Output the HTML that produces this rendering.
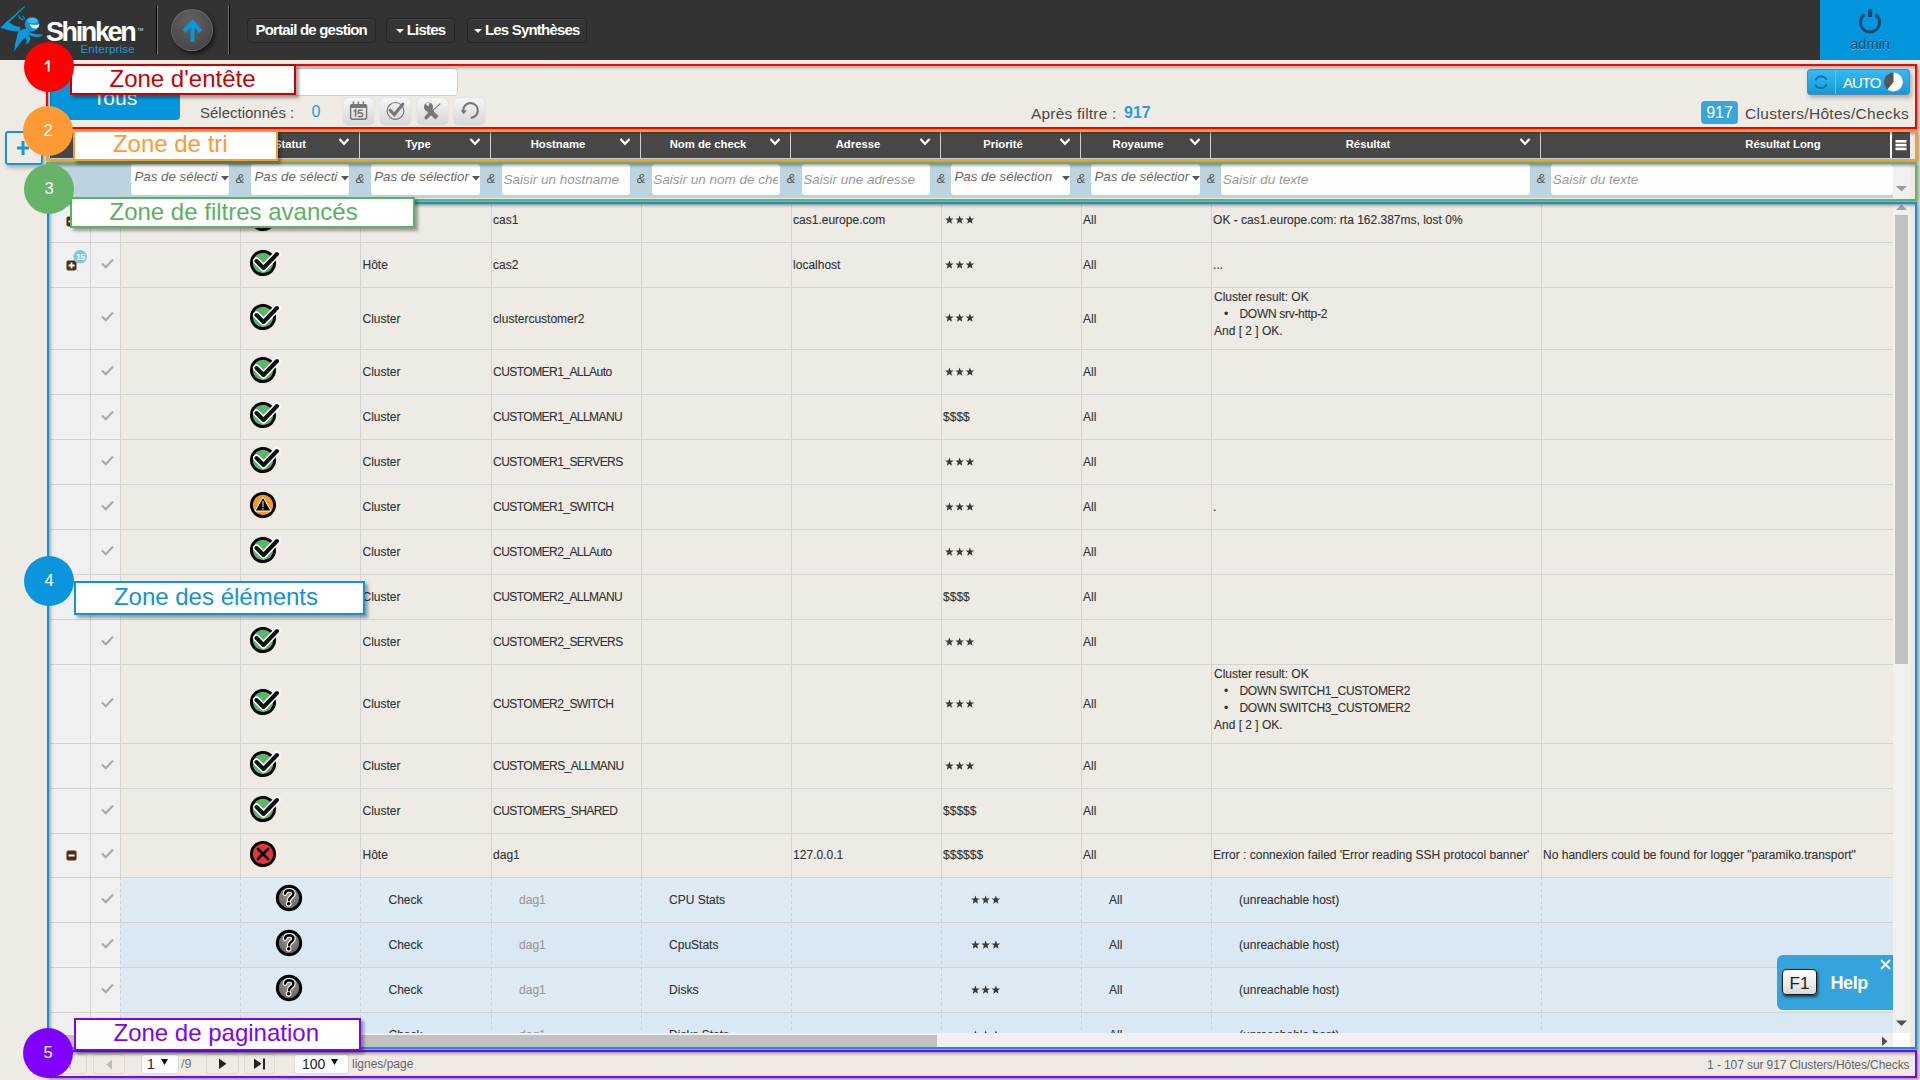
<!DOCTYPE html>
<html><head><meta charset="utf-8"><title>Shinken</title>
<style>
html,body{margin:0;padding:0;}
body{width:1920px;height:1080px;position:relative;overflow:hidden;background:#eeebe4;font-family:"Liberation Sans",sans-serif;}
.t{position:absolute;line-height:1;white-space:nowrap;}
.d{-webkit-text-stroke:0.12px currentColor;}
.b{position:absolute;box-sizing:border-box;}
svg{position:absolute;overflow:visible;}
</style></head><body>

<div class="b" style="left:0px;top:0px;width:1920px;height:60px;background:#333333;"></div>
<svg style="left:0;top:0" width="48" height="60" viewBox="0 0 48 60">
<g fill="#0e98dc">
<path d="M0.6 27.6 L24.4 5.9 L25.1 6.7 L2.4 28.8 Z"/>
<path d="M2 27.8 Q5 22.5 7.6 20.8 Q11.5 25.6 20.5 27.2 L19.6 31.6 Q9.5 31.6 2 27.8 Z"/>
<circle cx="32" cy="24.2" r="7.3"/>
<path d="M18.6 31.4 Q23 28 27.5 29 Q31 31 29.3 35 Q26 37.5 22 40.5 Q17.5 46 14 52 Q14.8 44 16.8 37.5 Q17.3 33.5 18.6 31.4 Z"/>
<path d="M26.8 35 Q31 36.8 30.4 40 Q29 43 25.6 44.8 Q27.6 41 25.8 38 Z"/>
<path d="M29 32.4 Q36 34 43 34.8 Q40.5 37.6 36 36.9 Q32 36.6 29.4 35.6 Z"/>
</g>
<ellipse cx="32.5" cy="20.5" rx="5" ry="2.6" fill="#7fcdf2" opacity="0.55"/>
<path d="M29.6 24.3 Q34 25.6 39.3 24.6 Q39 27.9 35.2 28.6 Q31.6 28.7 29.6 24.3 Z" fill="#ffffff"/>
<path d="M18.6 15.2 Q19.4 19 23.6 19.8" stroke="#0e98dc" stroke-width="1.3" fill="none"/>
<path d="M22.4 16.2 Q23.8 17.2 24.8 19" stroke="#0e98dc" stroke-width="1.1" fill="none"/>
</svg>
<div class="t " style="left:46px;top:18.64px;font-size:27px;color:#ffffff;font-weight:bold;font-style:normal;letter-spacing:-2.4px;">Shinken</div>
<div class="t " style="left:137.5px;top:27.61px;font-size:4px;color:#bbbbbb;font-weight:bold;font-style:normal;">TM</div>
<div class="t " style="left:80.5px;top:44.27px;font-size:11.5px;color:#1a9be0;font-weight:normal;font-style:normal;letter-spacing:0.2px;">Enterprise</div>
<div class="b" style="left:156px;top:5px;width:1px;height:50px;background:#050505;"></div>
<div class="b" style="left:157px;top:5px;width:1px;height:50px;background:#6e6e6e;"></div>
<div class="b" style="left:228px;top:5px;width:1px;height:50px;background:#6e6e6e;"></div>
<div class="b" style="left:229px;top:5px;width:1px;height:50px;background:#050505;"></div>
<div class="b" style="left:171px;top:9px;width:42px;height:42px;border-radius:50%;background:radial-gradient(circle at 45% 30%,#626262,#484848 75%);border:1px solid rgba(255,255,255,0.13);box-shadow:2px 3px 4px rgba(0,0,0,0.55);"></div>
<svg style="left:171px;top:9px" width="42" height="42" viewBox="0 0 42 42">
<path d="M21.5 33 L21.5 14" stroke="#0596dc" stroke-width="4" fill="none"/><path d="M13.2 22.5 L21.5 13.2 L29.8 22.5" stroke="#0596dc" stroke-width="4.2" fill="none" stroke-linejoin="miter"/>
</svg>
<div class="b" style="left:247px;top:18px;width:128.5px;height:25px;border:1px solid #262626;border-radius:4px;background:#353535;box-shadow:inset 0 1px 0 rgba(255,255,255,0.06);"></div>
<div class="t" style="left:247px;width:128.5px;top:21px;height:18px;line-height:18px;text-align:center;font-size:15px;color:#fff;font-weight:bold;letter-spacing:-0.8px;">Portail de gestion</div>
<div class="b" style="left:386px;top:18px;width:69px;height:25px;border:1px solid #262626;border-radius:4px;background:#353535;box-shadow:inset 0 1px 0 rgba(255,255,255,0.06);"></div>
<div class="t" style="left:386px;width:69px;top:21px;height:18px;line-height:18px;text-align:center;font-size:15px;color:#fff;font-weight:bold;letter-spacing:-0.8px;"><span style="display:inline-block;width:0;height:0;border-left:4px solid transparent;border-right:4px solid transparent;border-top:4px solid #fff;vertical-align:middle;margin-right:3px;"></span>Listes</div>
<div class="b" style="left:467px;top:18px;width:119.5px;height:25px;border:1px solid #262626;border-radius:4px;background:#353535;box-shadow:inset 0 1px 0 rgba(255,255,255,0.06);"></div>
<div class="t" style="left:467px;width:119.5px;top:21px;height:18px;line-height:18px;text-align:center;font-size:15px;color:#fff;font-weight:bold;letter-spacing:-0.8px;"><span style="display:inline-block;width:0;height:0;border-left:4px solid transparent;border-right:4px solid transparent;border-top:4px solid #fff;vertical-align:middle;margin-right:3px;"></span>Les Synthèses</div>
<div class="b" style="left:1820px;top:0px;width:100px;height:60px;background:#0396dc;"></div>
<svg style="left:1820px;top:0" width="100" height="60" viewBox="0 0 100 60">
<path d="M44.5 14.5 A9.6 9.6 0 1 0 55.5 14.5" stroke="#0d4a70" stroke-width="2.8" fill="none"/>
<rect x="48" y="9" width="4.2" height="8" fill="#0d4a70"/>
</svg>
<div class="t " style="left:1820.0px;width:100px;text-align:center;top:36.73px;font-size:14.5px;color:#0d4a70;font-weight:normal;font-style:normal;text-shadow:0 1px 0 rgba(255,255,255,0.35);">admin</div>
<div class="b" style="left:5px;top:131px;width:38px;height:34px;border:2px solid #1a96d8;border-radius:3px;box-shadow:2px 3px 4px rgba(0,0,0,0.25);"></div>
<svg style="left:5px;top:131px" width="38" height="34"><path d="M18 10 V24 M12 17 H24" stroke="#1a96d8" stroke-width="3" fill="none"/></svg>
<div class="b" style="left:50px;top:69px;width:130px;height:50.5px;background:#0595da;border-radius:4px;"></div>
<div class="t " style="left:50.0px;width:130px;text-align:center;top:86.72px;font-size:21px;color:#ffffff;font-weight:normal;font-style:normal;">Tous</div>
<div class="b" style="left:290px;top:68px;width:167.5px;height:27.5px;background:#fff;border:1px solid #cfcfcf;border-radius:4px;"></div>
<div class="t " style="left:200px;top:104.70px;font-size:15px;color:#4a4a4a;font-weight:normal;font-style:normal;">Sélectionnés :</div>
<div class="t " style="left:311.5px;top:103.96px;font-size:16px;color:#2a9ddc;font-weight:normal;font-style:normal;">0</div>
<div class="b" style="left:342.5px;top:98px;width:31px;height:27px;border-radius:5px;background:linear-gradient(#f6f6f6,#d6d6d6);box-shadow:0 0 1px rgba(0,0,0,0.25);"></div>
<svg style="left:342px;top:97px" width="32" height="27" viewBox="0 0 32 27"><rect x="8.6" y="7.6" width="16" height="14.6" rx="2" stroke="#777" stroke-width="1.4" fill="none"/><rect x="8.2" y="7" width="16.8" height="4" rx="1.5" fill="#777"/><path d="M11.4 5 v3.5 M16.4 5 v3.5 M21.4 5 v3.5" stroke="#777" stroke-width="1.5" stroke-linecap="round"/><path d="M11.8 14.4 L13.6 13 V19.6" stroke="#777" stroke-width="1.6" fill="none"/><path d="M20.6 13.2 H16.6 L16.3 16.2 Q17.3 15.6 18.4 15.7 Q20.7 16 20.7 17.8 Q20.6 19.8 18.3 19.8 Q16.9 19.8 16 19" stroke="#777" stroke-width="1.5" fill="none"/></svg>
<div class="b" style="left:379.5px;top:98px;width:31px;height:27px;border-radius:5px;background:linear-gradient(#f6f6f6,#d6d6d6);box-shadow:0 0 1px rgba(0,0,0,0.25);"></div>
<svg style="left:379px;top:97px" width="32" height="27" viewBox="0 0 32 27"><circle cx="16.5" cy="13.9" r="8.4" stroke="#777" stroke-width="1.2" fill="none"/><path d="M11.2 13.2 L15.3 17.6 L23.8 7.2" stroke="#777" stroke-width="3.1" fill="none" stroke-linecap="round"/></svg>
<div class="b" style="left:416.5px;top:98px;width:31px;height:27px;border-radius:5px;background:linear-gradient(#f6f6f6,#d6d6d6);box-shadow:0 0 1px rgba(0,0,0,0.25);"></div>
<svg style="left:416px;top:97px" width="32" height="27" viewBox="0 0 32 27"><path d="M12.6 13 L21 20.8" stroke="#777" stroke-width="4.6"/><circle cx="12.5" cy="10" r="4.6" fill="#777"/><path d="M9.2 6.6 L12.2 9.4 L14.2 5.6 Z" fill="#e6e6e6"/><path d="M24.3 6.6 L16 14.2" stroke="#777" stroke-width="1.1"/><path d="M16.2 14.2 L10.2 20.6" stroke="#777" stroke-width="3.6" stroke-linecap="round"/></svg>
<div class="b" style="left:453.5px;top:98px;width:31px;height:27px;border-radius:5px;background:linear-gradient(#f6f6f6,#d6d6d6);box-shadow:0 0 1px rgba(0,0,0,0.25);"></div>
<svg style="left:453px;top:97px" width="32" height="27" viewBox="0 0 32 27"><path d="M10.2 13.6 A7.3 7.3 0 1 1 18.6 20.6" stroke="#777" stroke-width="2.1" fill="none" stroke-linecap="round"/><path d="M7.6 13.3 L13.9 13.3 L10.7 17.2 Z" fill="#777"/></svg>
<div class="t " style="left:1031px;top:105.58px;font-size:15.5px;color:#4a4a4a;font-weight:normal;font-style:normal;letter-spacing:0.2px;">Après filtre :</div>
<div class="t " style="left:1124px;top:105.16px;font-size:16px;color:#2a9ddc;font-weight:bold;font-style:normal;">917</div>
<div class="b" style="left:1807px;top:69px;width:103px;height:26px;border-radius:3px;background:linear-gradient(#37b9f2,#129ad9);border:1px solid #5a86b0;box-shadow:2px 3px 4px rgba(0,0,0,0.25);"></div>
<div class="b" style="left:1834.5px;top:70px;width:1px;height:24px;background:#5bc8f5;"></div>
<svg style="left:1807px;top:69px" width="103" height="26" viewBox="0 0 103 26">
<path d="M8.5 11.5 A6 6 0 0 1 19.5 10.5" stroke="#0c6fa3" stroke-width="1.8" fill="none"/>
<path d="M19.5 15 A6 6 0 0 1 8.5 16" stroke="#0c6fa3" stroke-width="1.8" fill="none"/>
<circle cx="86.5" cy="13" r="9.5" fill="#555"/>
<path d="M86.5 3.5 A9.5 9.5 0 1 1 80.5 20.5 L86.5 13 Z" fill="#fff"/>
</svg>
<div class="t " style="left:1843px;top:74.80px;font-size:15px;color:#ffffff;font-weight:normal;font-style:normal;letter-spacing:-1px;">AUTO</div>
<div class="b" style="left:1701px;top:101px;width:37px;height:23px;background:#35a7dd;border-radius:4px;"></div>
<div class="t " style="left:1701.0px;width:37px;text-align:center;top:105.46px;font-size:16px;color:#ffffff;font-weight:normal;font-style:normal;">917</div>
<div class="t " style="left:1609px;width:300px;text-align:right;top:105.88px;font-size:15.5px;color:#4a4a4a;font-weight:normal;font-style:normal;letter-spacing:0.3px;">Clusters/Hôtes/Checks</div>
<div class="b" style="left:50px;top:132px;width:1860px;height:26px;background:linear-gradient(#555 0,#484848 5px,#474747 100%);"></div>
<div class="b" style="left:50px;top:158px;width:1860px;height:1px;background:#bcd4e0;"></div>
<div class="b" style="left:359px;top:132px;width:1px;height:26px;background:#d0d0d0;"></div>
<div class="b" style="left:490px;top:132px;width:1px;height:26px;background:#d0d0d0;"></div>
<div class="b" style="left:640px;top:132px;width:1px;height:26px;background:#d0d0d0;"></div>
<div class="b" style="left:790px;top:132px;width:1px;height:26px;background:#d0d0d0;"></div>
<div class="b" style="left:940px;top:132px;width:1px;height:26px;background:#d0d0d0;"></div>
<div class="b" style="left:1080px;top:132px;width:1px;height:26px;background:#d0d0d0;"></div>
<div class="b" style="left:1210px;top:132px;width:1px;height:26px;background:#d0d0d0;"></div>
<div class="b" style="left:1540px;top:132px;width:1px;height:26px;background:#d0d0d0;"></div>
<div class="b" style="left:1890px;top:132px;width:2px;height:26px;background:#ffffff;"></div>
<div class="t " style="left:190.0px;width:200px;text-align:center;top:139.43px;font-size:11.3px;color:#ffffff;font-weight:bold;font-style:normal;">Statut</div>
<div class="t " style="left:318.0px;width:200px;text-align:center;top:139.43px;font-size:11.3px;color:#ffffff;font-weight:bold;font-style:normal;">Type</div>
<div class="t " style="left:458.0px;width:200px;text-align:center;top:139.43px;font-size:11.3px;color:#ffffff;font-weight:bold;font-style:normal;">Hostname</div>
<div class="t " style="left:608.0px;width:200px;text-align:center;top:139.43px;font-size:11.3px;color:#ffffff;font-weight:bold;font-style:normal;">Nom de check</div>
<div class="t " style="left:758.0px;width:200px;text-align:center;top:139.43px;font-size:11.3px;color:#ffffff;font-weight:bold;font-style:normal;">Adresse</div>
<div class="t " style="left:903.0px;width:200px;text-align:center;top:139.43px;font-size:11.3px;color:#ffffff;font-weight:bold;font-style:normal;">Priorité</div>
<div class="t " style="left:1038.0px;width:200px;text-align:center;top:139.43px;font-size:11.3px;color:#ffffff;font-weight:bold;font-style:normal;">Royaume</div>
<div class="t " style="left:1268.0px;width:200px;text-align:center;top:139.43px;font-size:11.3px;color:#ffffff;font-weight:bold;font-style:normal;">Résultat</div>
<div class="t " style="left:1683.0px;width:200px;text-align:center;top:139.43px;font-size:11.3px;color:#ffffff;font-weight:bold;font-style:normal;">Résultat Long</div>
<svg style="left:338px;top:137px" width="12" height="10"><path d="M1.5 2 L6 6.8 L10.5 2" stroke="#fff" stroke-width="2.2" fill="none"/></svg>
<svg style="left:469px;top:137px" width="12" height="10"><path d="M1.5 2 L6 6.8 L10.5 2" stroke="#fff" stroke-width="2.2" fill="none"/></svg>
<svg style="left:619px;top:137px" width="12" height="10"><path d="M1.5 2 L6 6.8 L10.5 2" stroke="#fff" stroke-width="2.2" fill="none"/></svg>
<svg style="left:769px;top:137px" width="12" height="10"><path d="M1.5 2 L6 6.8 L10.5 2" stroke="#fff" stroke-width="2.2" fill="none"/></svg>
<svg style="left:919px;top:137px" width="12" height="10"><path d="M1.5 2 L6 6.8 L10.5 2" stroke="#fff" stroke-width="2.2" fill="none"/></svg>
<svg style="left:1059px;top:137px" width="12" height="10"><path d="M1.5 2 L6 6.8 L10.5 2" stroke="#fff" stroke-width="2.2" fill="none"/></svg>
<svg style="left:1189px;top:137px" width="12" height="10"><path d="M1.5 2 L6 6.8 L10.5 2" stroke="#fff" stroke-width="2.2" fill="none"/></svg>
<svg style="left:1519px;top:137px" width="12" height="10"><path d="M1.5 2 L6 6.8 L10.5 2" stroke="#fff" stroke-width="2.2" fill="none"/></svg>
<svg style="left:1892px;top:132px" width="18" height="26"><rect x="3.5" y="8" width="11" height="2.6" fill="#fff"/><rect x="3.5" y="11.8" width="11" height="2.6" fill="#fff"/><rect x="3.5" y="15.6" width="11" height="2.6" fill="#fff"/></svg>
<div class="b" style="left:50px;top:164px;width:1843px;height:34px;background:#bcd4e0;"></div>
<div class="b" style="left:1893px;top:164px;width:17px;height:35px;background:#f0f0f0;"></div>
<svg style="left:1896px;top:186px" width="11" height="6"><path d="M0 0 H11 L5.5 5.5 Z" fill="#999"/></svg>
<div class="b" style="left:131px;top:164.2px;width:98px;height:31px;background:#fff;border-radius:3px;overflow:hidden;"></div>
<div class="t" style="left:134.5px;top:170.04px;width:87px;overflow:hidden;font-size:13.3px;color:#666;font-style:italic;">Pas de sélecti</div>
<svg style="left:221px;top:176px" width="8" height="5"><path d="M0 0 H8 L4 4.5 Z" fill="#555"/></svg>
<div class="b" style="left:251px;top:164.2px;width:98px;height:31px;background:#fff;border-radius:3px;overflow:hidden;"></div>
<div class="t" style="left:254.5px;top:170.04px;width:87px;overflow:hidden;font-size:13.3px;color:#666;font-style:italic;">Pas de sélecti</div>
<svg style="left:341px;top:176px" width="8" height="5"><path d="M0 0 H8 L4 4.5 Z" fill="#555"/></svg>
<div class="b" style="left:370.75px;top:164.2px;width:109.25px;height:31px;background:#fff;border-radius:3px;overflow:hidden;"></div>
<div class="t" style="left:374.25px;top:170.04px;width:98.25px;overflow:hidden;font-size:13.3px;color:#666;font-style:italic;">Pas de sélectior</div>
<svg style="left:472px;top:176px" width="8" height="5"><path d="M0 0 H8 L4 4.5 Z" fill="#555"/></svg>
<div class="b" style="left:951px;top:164.2px;width:119px;height:31px;background:#fff;border-radius:3px;overflow:hidden;"></div>
<div class="t" style="left:954.5px;top:170.04px;width:108px;overflow:hidden;font-size:13.3px;color:#666;font-style:italic;">Pas de sélection</div>
<svg style="left:1062px;top:176px" width="8" height="5"><path d="M0 0 H8 L4 4.5 Z" fill="#555"/></svg>
<div class="b" style="left:1091px;top:164.2px;width:109px;height:31px;background:#fff;border-radius:3px;overflow:hidden;"></div>
<div class="t" style="left:1094.5px;top:170.04px;width:98px;overflow:hidden;font-size:13.3px;color:#666;font-style:italic;">Pas de sélectior</div>
<svg style="left:1192px;top:176px" width="8" height="5"><path d="M0 0 H8 L4 4.5 Z" fill="#555"/></svg>
<div class="b" style="left:501.75px;top:164.2px;width:128.25px;height:31px;background:#fff;border-radius:3px;"></div>
<div class="t" style="left:503.45px;top:173.27px;width:124.25px;overflow:hidden;font-size:13.5px;color:#999;font-style:italic;">Saisir un hostname</div>
<div class="b" style="left:651.5px;top:164.2px;width:128.5px;height:31px;background:#fff;border-radius:3px;"></div>
<div class="t" style="left:653.2px;top:173.27px;width:124.5px;overflow:hidden;font-size:13.5px;color:#999;font-style:italic;">Saisir un nom de check</div>
<div class="b" style="left:801.5px;top:164.2px;width:128.5px;height:31px;background:#fff;border-radius:3px;"></div>
<div class="t" style="left:803.2px;top:173.27px;width:124.5px;overflow:hidden;font-size:13.5px;color:#999;font-style:italic;">Saisir une adresse</div>
<div class="b" style="left:1221px;top:164.2px;width:309px;height:31px;background:#fff;border-radius:3px;"></div>
<div class="t" style="left:1222.7px;top:173.27px;width:305px;overflow:hidden;font-size:13.5px;color:#999;font-style:italic;">Saisir du texte</div>
<div class="b" style="left:1551px;top:164.2px;width:342px;height:31px;background:#fff;border-radius:3px;"></div>
<div class="t" style="left:1552.7px;top:173.27px;width:338px;overflow:hidden;font-size:13.5px;color:#999;font-style:italic;">Saisir du texte</div>
<div class="t " style="left:230.0px;width:20px;text-align:center;top:172.00px;font-size:13px;color:#555;font-weight:normal;font-style:italic;">&amp;</div>
<div class="t " style="left:350.0px;width:20px;text-align:center;top:172.00px;font-size:13px;color:#555;font-weight:normal;font-style:italic;">&amp;</div>
<div class="t " style="left:481.0px;width:20px;text-align:center;top:172.00px;font-size:13px;color:#555;font-weight:normal;font-style:italic;">&amp;</div>
<div class="t " style="left:631.0px;width:20px;text-align:center;top:172.00px;font-size:13px;color:#555;font-weight:normal;font-style:italic;">&amp;</div>
<div class="t " style="left:781.0px;width:20px;text-align:center;top:172.00px;font-size:13px;color:#555;font-weight:normal;font-style:italic;">&amp;</div>
<div class="t " style="left:931.0px;width:20px;text-align:center;top:172.00px;font-size:13px;color:#555;font-weight:normal;font-style:italic;">&amp;</div>
<div class="t " style="left:1071.0px;width:20px;text-align:center;top:172.00px;font-size:13px;color:#555;font-weight:normal;font-style:italic;">&amp;</div>
<div class="t " style="left:1201.0px;width:20px;text-align:center;top:172.00px;font-size:13px;color:#555;font-weight:normal;font-style:italic;">&amp;</div>
<div class="t " style="left:1531.0px;width:20px;text-align:center;top:172.00px;font-size:13px;color:#555;font-weight:normal;font-style:italic;">&amp;</div>
<div class="b" style="left:50px;top:204px;width:1843px;height:829px;overflow:hidden;">
<div class="b" style="left:0px;top:0px;width:70px;height:829px;background:#f0f0f0;"></div>
<div class="b" style="left:70px;top:673px;width:1773px;height:45px;background:#deeaf4;"></div>
<div class="b" style="left:70px;top:718px;width:1773px;height:45px;background:#d9e8f3;"></div>
<div class="b" style="left:70px;top:763px;width:1773px;height:45px;background:#deeaf4;"></div>
<div class="b" style="left:70px;top:808px;width:1773px;height:45px;background:#d9e8f3;"></div>
<div class="b" style="left:0px;top:38px;width:1843px;height:1px;background:#d3d3d3;"></div>
<div class="b" style="left:0px;top:83px;width:1843px;height:1px;background:#d3d3d3;"></div>
<div class="b" style="left:0px;top:145px;width:1843px;height:1px;background:#d3d3d3;"></div>
<div class="b" style="left:0px;top:190px;width:1843px;height:1px;background:#d3d3d3;"></div>
<div class="b" style="left:0px;top:235px;width:1843px;height:1px;background:#d3d3d3;"></div>
<div class="b" style="left:0px;top:280px;width:1843px;height:1px;background:#d3d3d3;"></div>
<div class="b" style="left:0px;top:325px;width:1843px;height:1px;background:#d3d3d3;"></div>
<div class="b" style="left:0px;top:370px;width:1843px;height:1px;background:#d3d3d3;"></div>
<div class="b" style="left:0px;top:415px;width:1843px;height:1px;background:#d3d3d3;"></div>
<div class="b" style="left:0px;top:460px;width:1843px;height:1px;background:#d3d3d3;"></div>
<div class="b" style="left:0px;top:539px;width:1843px;height:1px;background:#d3d3d3;"></div>
<div class="b" style="left:0px;top:584px;width:1843px;height:1px;background:#d3d3d3;"></div>
<div class="b" style="left:0px;top:629px;width:1843px;height:1px;background:#d3d3d3;"></div>
<div class="b" style="left:0px;top:673px;width:1843px;height:1px;background:#d3d3d3;"></div>
<div class="b" style="left:0px;top:718px;width:1843px;height:1px;background:#d3d3d3;"></div>
<div class="b" style="left:0px;top:763px;width:1843px;height:1px;background:#d3d3d3;"></div>
<div class="b" style="left:0px;top:808px;width:1843px;height:1px;background:#d3d3d3;"></div>
<div class="b" style="left:0px;top:853px;width:1843px;height:1px;background:#d3d3d3;"></div>
<div class="b" style="left:40px;top:0px;width:1px;height:673px;background:#d3d3d3;"></div>
<div class="b" style="left:40px;top:673px;width:1px;height:156px;background:#d3d3d3;"></div>
<div class="b" style="left:70px;top:0px;width:1px;height:673px;background:#d3d3d3;"></div>
<div class="b" style="left:70px;top:673px;width:1px;height:156px;background:repeating-linear-gradient(#cfcfcf 0 3px,transparent 3px 6px);"></div>
<div class="b" style="left:190px;top:0px;width:1px;height:673px;background:#d3d3d3;"></div>
<div class="b" style="left:190px;top:673px;width:1px;height:156px;background:repeating-linear-gradient(#cfcfcf 0 3px,transparent 3px 6px);"></div>
<div class="b" style="left:310px;top:0px;width:1px;height:673px;background:#d3d3d3;"></div>
<div class="b" style="left:310px;top:673px;width:1px;height:156px;background:repeating-linear-gradient(#cfcfcf 0 3px,transparent 3px 6px);"></div>
<div class="b" style="left:441px;top:0px;width:1px;height:673px;background:#d3d3d3;"></div>
<div class="b" style="left:441px;top:673px;width:1px;height:156px;background:repeating-linear-gradient(#cfcfcf 0 3px,transparent 3px 6px);"></div>
<div class="b" style="left:591px;top:0px;width:1px;height:673px;background:#d3d3d3;"></div>
<div class="b" style="left:591px;top:673px;width:1px;height:156px;background:repeating-linear-gradient(#cfcfcf 0 3px,transparent 3px 6px);"></div>
<div class="b" style="left:741px;top:0px;width:1px;height:673px;background:#d3d3d3;"></div>
<div class="b" style="left:741px;top:673px;width:1px;height:156px;background:repeating-linear-gradient(#cfcfcf 0 3px,transparent 3px 6px);"></div>
<div class="b" style="left:891px;top:0px;width:1px;height:673px;background:#d3d3d3;"></div>
<div class="b" style="left:891px;top:673px;width:1px;height:156px;background:repeating-linear-gradient(#cfcfcf 0 3px,transparent 3px 6px);"></div>
<div class="b" style="left:1031px;top:0px;width:1px;height:673px;background:#d3d3d3;"></div>
<div class="b" style="left:1031px;top:673px;width:1px;height:156px;background:repeating-linear-gradient(#cfcfcf 0 3px,transparent 3px 6px);"></div>
<div class="b" style="left:1161px;top:0px;width:1px;height:673px;background:#d3d3d3;"></div>
<div class="b" style="left:1161px;top:673px;width:1px;height:156px;background:repeating-linear-gradient(#cfcfcf 0 3px,transparent 3px 6px);"></div>
<div class="b" style="left:1491px;top:0px;width:1px;height:673px;background:#d3d3d3;"></div>
<div class="b" style="left:1491px;top:673px;width:1px;height:156px;background:repeating-linear-gradient(#cfcfcf 0 3px,transparent 3px 6px);"></div>
<svg style="left:51px;top:8.5px" width="13" height="11"><path d="M1 5.5 L4.8 9.3 L12 1.5" stroke="#a8a8a8" stroke-width="2" fill="none"/></svg>
<svg style="left:198px;top:-1.0px" width="30" height="30" viewBox="0 0 30 30"><circle cx="15" cy="15" r="13.5" fill="rgba(0,0,0,0.08)"/><circle cx="15" cy="15" r="11.6" fill="#5cb46e" stroke="#000" stroke-width="2.8"/><path d="M8.5 13 L15.5 20 L29 6" stroke="#fff" stroke-width="7" fill="none" stroke-linecap="round" stroke-linejoin="round"/><path d="M8.5 13 L15.5 20 L29 6" stroke="#111" stroke-width="4" fill="none" stroke-linecap="round" stroke-linejoin="round"/></svg>
<div class="t d" style="left:312.5px;top:10.34px;font-size:12px;color:#333333;font-weight:normal;font-style:normal;">Hôte</div>
<div class="t d" style="left:443.1px;top:10.34px;font-size:12px;color:#333333;font-weight:normal;font-style:normal;letter-spacing:0px;">cas1</div>
<div class="t d" style="left:743.1px;top:10.34px;font-size:12px;color:#333333;font-weight:normal;font-style:normal;">cas1.europe.com</div>
<svg style="left:895px;top:10.90px" width="32" height="10"><path d="M4.40,0.50 L5.52,3.46 L8.68,3.61 L6.21,5.59 L7.05,8.64 L4.40,6.90 L1.75,8.64 L2.59,5.59 L0.12,3.61 L3.28,3.46 Z M14.65,0.50 L15.77,3.46 L18.93,3.61 L16.46,5.59 L17.30,8.64 L14.65,6.90 L12.00,8.64 L12.84,5.59 L10.37,3.61 L13.53,3.46 Z M24.90,0.50 L26.02,3.46 L29.18,3.61 L26.71,5.59 L27.55,8.64 L24.90,6.90 L22.25,8.64 L23.09,5.59 L20.62,3.61 L23.78,3.46 Z" fill="#3a3a3a"/></svg>
<div class="t d" style="left:1033.1px;top:10.34px;font-size:12px;color:#333333;font-weight:normal;font-style:normal;">All</div>
<div class="t d" style="left:1163.1px;top:10.34px;font-size:12px;color:#333333;font-weight:normal;font-style:normal;">OK - cas1.europe.com: rta 162.387ms, lost 0%</div>
<svg style="left:51px;top:53.5px" width="13" height="11"><path d="M1 5.5 L4.8 9.3 L12 1.5" stroke="#a8a8a8" stroke-width="2" fill="none"/></svg>
<svg style="left:198px;top:44.0px" width="30" height="30" viewBox="0 0 30 30"><circle cx="15" cy="15" r="13.5" fill="rgba(0,0,0,0.08)"/><circle cx="15" cy="15" r="11.6" fill="#5cb46e" stroke="#000" stroke-width="2.8"/><path d="M8.5 13 L15.5 20 L29 6" stroke="#fff" stroke-width="7" fill="none" stroke-linecap="round" stroke-linejoin="round"/><path d="M8.5 13 L15.5 20 L29 6" stroke="#111" stroke-width="4" fill="none" stroke-linecap="round" stroke-linejoin="round"/></svg>
<div class="t d" style="left:312.5px;top:55.34px;font-size:12px;color:#333333;font-weight:normal;font-style:normal;">Hôte</div>
<div class="t d" style="left:443.1px;top:55.34px;font-size:12px;color:#333333;font-weight:normal;font-style:normal;letter-spacing:0px;">cas2</div>
<div class="t d" style="left:743.1px;top:55.34px;font-size:12px;color:#333333;font-weight:normal;font-style:normal;">localhost</div>
<svg style="left:895px;top:55.90px" width="32" height="10"><path d="M4.40,0.50 L5.52,3.46 L8.68,3.61 L6.21,5.59 L7.05,8.64 L4.40,6.90 L1.75,8.64 L2.59,5.59 L0.12,3.61 L3.28,3.46 Z M14.65,0.50 L15.77,3.46 L18.93,3.61 L16.46,5.59 L17.30,8.64 L14.65,6.90 L12.00,8.64 L12.84,5.59 L10.37,3.61 L13.53,3.46 Z M24.90,0.50 L26.02,3.46 L29.18,3.61 L26.71,5.59 L27.55,8.64 L24.90,6.90 L22.25,8.64 L23.09,5.59 L20.62,3.61 L23.78,3.46 Z" fill="#3a3a3a"/></svg>
<div class="t d" style="left:1033.1px;top:55.34px;font-size:12px;color:#333333;font-weight:normal;font-style:normal;">All</div>
<div class="t d" style="left:1163.1px;top:55.34px;font-size:12px;color:#333333;font-weight:normal;font-style:normal;">...</div>
<svg style="left:51px;top:107.0px" width="13" height="11"><path d="M1 5.5 L4.8 9.3 L12 1.5" stroke="#a8a8a8" stroke-width="2" fill="none"/></svg>
<svg style="left:198px;top:97.5px" width="30" height="30" viewBox="0 0 30 30"><circle cx="15" cy="15" r="13.5" fill="rgba(0,0,0,0.08)"/><circle cx="15" cy="15" r="11.6" fill="#5cb46e" stroke="#000" stroke-width="2.8"/><path d="M8.5 13 L15.5 20 L29 6" stroke="#fff" stroke-width="7" fill="none" stroke-linecap="round" stroke-linejoin="round"/><path d="M8.5 13 L15.5 20 L29 6" stroke="#111" stroke-width="4" fill="none" stroke-linecap="round" stroke-linejoin="round"/></svg>
<div class="t d" style="left:312.5px;top:108.84px;font-size:12px;color:#333333;font-weight:normal;font-style:normal;">Cluster</div>
<div class="t d" style="left:443.1px;top:108.84px;font-size:12px;color:#333333;font-weight:normal;font-style:normal;letter-spacing:0px;">clustercustomer2</div>
<svg style="left:895px;top:109.40px" width="32" height="10"><path d="M4.40,0.50 L5.52,3.46 L8.68,3.61 L6.21,5.59 L7.05,8.64 L4.40,6.90 L1.75,8.64 L2.59,5.59 L0.12,3.61 L3.28,3.46 Z M14.65,0.50 L15.77,3.46 L18.93,3.61 L16.46,5.59 L17.30,8.64 L14.65,6.90 L12.00,8.64 L12.84,5.59 L10.37,3.61 L13.53,3.46 Z M24.90,0.50 L26.02,3.46 L29.18,3.61 L26.71,5.59 L27.55,8.64 L24.90,6.90 L22.25,8.64 L23.09,5.59 L20.62,3.61 L23.78,3.46 Z" fill="#3a3a3a"/></svg>
<div class="t d" style="left:1033.1px;top:108.84px;font-size:12px;color:#333333;font-weight:normal;font-style:normal;">All</div>
<div class="t d" style="left:1164px;top:87.24px;font-size:12px;color:#333333;font-weight:normal;font-style:normal;">Cluster result: OK</div>
<div class="t d" style="left:1174px;top:104.24px;font-size:12px;color:#333333;font-weight:normal;font-style:normal;">•</div>
<div class="t d" style="left:1189.5px;top:104.24px;font-size:12px;color:#333333;font-weight:normal;font-style:normal;letter-spacing:-0.3px;">DOWN srv-http-2</div>
<div class="t d" style="left:1164px;top:121.24px;font-size:12px;color:#333333;font-weight:normal;font-style:normal;">And [ 2 ] OK.</div>
<svg style="left:51px;top:160.5px" width="13" height="11"><path d="M1 5.5 L4.8 9.3 L12 1.5" stroke="#a8a8a8" stroke-width="2" fill="none"/></svg>
<svg style="left:198px;top:151.0px" width="30" height="30" viewBox="0 0 30 30"><circle cx="15" cy="15" r="13.5" fill="rgba(0,0,0,0.08)"/><circle cx="15" cy="15" r="11.6" fill="#5cb46e" stroke="#000" stroke-width="2.8"/><path d="M8.5 13 L15.5 20 L29 6" stroke="#fff" stroke-width="7" fill="none" stroke-linecap="round" stroke-linejoin="round"/><path d="M8.5 13 L15.5 20 L29 6" stroke="#111" stroke-width="4" fill="none" stroke-linecap="round" stroke-linejoin="round"/></svg>
<div class="t d" style="left:312.5px;top:162.34px;font-size:12px;color:#333333;font-weight:normal;font-style:normal;">Cluster</div>
<div class="t d" style="left:443.1px;top:162.34px;font-size:12px;color:#333333;font-weight:normal;font-style:normal;letter-spacing:-0.55px;">CUSTOMER1_ALLAuto</div>
<svg style="left:895px;top:162.90px" width="32" height="10"><path d="M4.40,0.50 L5.52,3.46 L8.68,3.61 L6.21,5.59 L7.05,8.64 L4.40,6.90 L1.75,8.64 L2.59,5.59 L0.12,3.61 L3.28,3.46 Z M14.65,0.50 L15.77,3.46 L18.93,3.61 L16.46,5.59 L17.30,8.64 L14.65,6.90 L12.00,8.64 L12.84,5.59 L10.37,3.61 L13.53,3.46 Z M24.90,0.50 L26.02,3.46 L29.18,3.61 L26.71,5.59 L27.55,8.64 L24.90,6.90 L22.25,8.64 L23.09,5.59 L20.62,3.61 L23.78,3.46 Z" fill="#3a3a3a"/></svg>
<div class="t d" style="left:1033.1px;top:162.34px;font-size:12px;color:#333333;font-weight:normal;font-style:normal;">All</div>
<svg style="left:51px;top:205.5px" width="13" height="11"><path d="M1 5.5 L4.8 9.3 L12 1.5" stroke="#a8a8a8" stroke-width="2" fill="none"/></svg>
<svg style="left:198px;top:196.0px" width="30" height="30" viewBox="0 0 30 30"><circle cx="15" cy="15" r="13.5" fill="rgba(0,0,0,0.08)"/><circle cx="15" cy="15" r="11.6" fill="#5cb46e" stroke="#000" stroke-width="2.8"/><path d="M8.5 13 L15.5 20 L29 6" stroke="#fff" stroke-width="7" fill="none" stroke-linecap="round" stroke-linejoin="round"/><path d="M8.5 13 L15.5 20 L29 6" stroke="#111" stroke-width="4" fill="none" stroke-linecap="round" stroke-linejoin="round"/></svg>
<div class="t d" style="left:312.5px;top:207.34px;font-size:12px;color:#333333;font-weight:normal;font-style:normal;">Cluster</div>
<div class="t d" style="left:443.1px;top:207.34px;font-size:12px;color:#333333;font-weight:normal;font-style:normal;letter-spacing:-0.55px;">CUSTOMER1_ALLMANU</div>
<div class="t d" style="left:893.1px;top:207.34px;font-size:12px;color:#333333;font-weight:normal;font-style:normal;">$$$$</div>
<div class="t d" style="left:1033.1px;top:207.34px;font-size:12px;color:#333333;font-weight:normal;font-style:normal;">All</div>
<svg style="left:51px;top:250.5px" width="13" height="11"><path d="M1 5.5 L4.8 9.3 L12 1.5" stroke="#a8a8a8" stroke-width="2" fill="none"/></svg>
<svg style="left:198px;top:241.0px" width="30" height="30" viewBox="0 0 30 30"><circle cx="15" cy="15" r="13.5" fill="rgba(0,0,0,0.08)"/><circle cx="15" cy="15" r="11.6" fill="#5cb46e" stroke="#000" stroke-width="2.8"/><path d="M8.5 13 L15.5 20 L29 6" stroke="#fff" stroke-width="7" fill="none" stroke-linecap="round" stroke-linejoin="round"/><path d="M8.5 13 L15.5 20 L29 6" stroke="#111" stroke-width="4" fill="none" stroke-linecap="round" stroke-linejoin="round"/></svg>
<div class="t d" style="left:312.5px;top:252.34px;font-size:12px;color:#333333;font-weight:normal;font-style:normal;">Cluster</div>
<div class="t d" style="left:443.1px;top:252.34px;font-size:12px;color:#333333;font-weight:normal;font-style:normal;letter-spacing:-0.55px;">CUSTOMER1_SERVERS</div>
<svg style="left:895px;top:252.90px" width="32" height="10"><path d="M4.40,0.50 L5.52,3.46 L8.68,3.61 L6.21,5.59 L7.05,8.64 L4.40,6.90 L1.75,8.64 L2.59,5.59 L0.12,3.61 L3.28,3.46 Z M14.65,0.50 L15.77,3.46 L18.93,3.61 L16.46,5.59 L17.30,8.64 L14.65,6.90 L12.00,8.64 L12.84,5.59 L10.37,3.61 L13.53,3.46 Z M24.90,0.50 L26.02,3.46 L29.18,3.61 L26.71,5.59 L27.55,8.64 L24.90,6.90 L22.25,8.64 L23.09,5.59 L20.62,3.61 L23.78,3.46 Z" fill="#3a3a3a"/></svg>
<div class="t d" style="left:1033.1px;top:252.34px;font-size:12px;color:#333333;font-weight:normal;font-style:normal;">All</div>
<svg style="left:51px;top:295.5px" width="13" height="11"><path d="M1 5.5 L4.8 9.3 L12 1.5" stroke="#a8a8a8" stroke-width="2" fill="none"/></svg>
<svg style="left:198px;top:286.0px" width="30" height="30" viewBox="0 0 30 30"><circle cx="15" cy="15" r="13.5" fill="rgba(0,0,0,0.08)"/><circle cx="15" cy="15" r="11.6" fill="#f19a26" stroke="#000" stroke-width="2.8"/><path d="M15 7 L23 21 L7 21 Z" fill="#000" stroke="#fff" stroke-width="1" stroke-linejoin="round"/><rect x="14.2" y="11" width="1.6" height="6" fill="#e8901e"/><rect x="14.2" y="18" width="1.6" height="1.6" fill="#e8901e"/></svg>
<div class="t d" style="left:312.5px;top:297.34px;font-size:12px;color:#333333;font-weight:normal;font-style:normal;">Cluster</div>
<div class="t d" style="left:443.1px;top:297.34px;font-size:12px;color:#333333;font-weight:normal;font-style:normal;letter-spacing:-0.55px;">CUSTOMER1_SWITCH</div>
<svg style="left:895px;top:297.90px" width="32" height="10"><path d="M4.40,0.50 L5.52,3.46 L8.68,3.61 L6.21,5.59 L7.05,8.64 L4.40,6.90 L1.75,8.64 L2.59,5.59 L0.12,3.61 L3.28,3.46 Z M14.65,0.50 L15.77,3.46 L18.93,3.61 L16.46,5.59 L17.30,8.64 L14.65,6.90 L12.00,8.64 L12.84,5.59 L10.37,3.61 L13.53,3.46 Z M24.90,0.50 L26.02,3.46 L29.18,3.61 L26.71,5.59 L27.55,8.64 L24.90,6.90 L22.25,8.64 L23.09,5.59 L20.62,3.61 L23.78,3.46 Z" fill="#3a3a3a"/></svg>
<div class="t d" style="left:1033.1px;top:297.34px;font-size:12px;color:#333333;font-weight:normal;font-style:normal;">All</div>
<div class="t d" style="left:1163.1px;top:297.34px;font-size:12px;color:#333333;font-weight:normal;font-style:normal;">.</div>
<svg style="left:51px;top:340.5px" width="13" height="11"><path d="M1 5.5 L4.8 9.3 L12 1.5" stroke="#a8a8a8" stroke-width="2" fill="none"/></svg>
<svg style="left:198px;top:331.0px" width="30" height="30" viewBox="0 0 30 30"><circle cx="15" cy="15" r="13.5" fill="rgba(0,0,0,0.08)"/><circle cx="15" cy="15" r="11.6" fill="#5cb46e" stroke="#000" stroke-width="2.8"/><path d="M8.5 13 L15.5 20 L29 6" stroke="#fff" stroke-width="7" fill="none" stroke-linecap="round" stroke-linejoin="round"/><path d="M8.5 13 L15.5 20 L29 6" stroke="#111" stroke-width="4" fill="none" stroke-linecap="round" stroke-linejoin="round"/></svg>
<div class="t d" style="left:312.5px;top:342.34px;font-size:12px;color:#333333;font-weight:normal;font-style:normal;">Cluster</div>
<div class="t d" style="left:443.1px;top:342.34px;font-size:12px;color:#333333;font-weight:normal;font-style:normal;letter-spacing:-0.55px;">CUSTOMER2_ALLAuto</div>
<svg style="left:895px;top:342.90px" width="32" height="10"><path d="M4.40,0.50 L5.52,3.46 L8.68,3.61 L6.21,5.59 L7.05,8.64 L4.40,6.90 L1.75,8.64 L2.59,5.59 L0.12,3.61 L3.28,3.46 Z M14.65,0.50 L15.77,3.46 L18.93,3.61 L16.46,5.59 L17.30,8.64 L14.65,6.90 L12.00,8.64 L12.84,5.59 L10.37,3.61 L13.53,3.46 Z M24.90,0.50 L26.02,3.46 L29.18,3.61 L26.71,5.59 L27.55,8.64 L24.90,6.90 L22.25,8.64 L23.09,5.59 L20.62,3.61 L23.78,3.46 Z" fill="#3a3a3a"/></svg>
<div class="t d" style="left:1033.1px;top:342.34px;font-size:12px;color:#333333;font-weight:normal;font-style:normal;">All</div>
<svg style="left:51px;top:385.5px" width="13" height="11"><path d="M1 5.5 L4.8 9.3 L12 1.5" stroke="#a8a8a8" stroke-width="2" fill="none"/></svg>
<svg style="left:198px;top:376.0px" width="30" height="30" viewBox="0 0 30 30"><circle cx="15" cy="15" r="13.5" fill="rgba(0,0,0,0.08)"/><circle cx="15" cy="15" r="11.6" fill="#5cb46e" stroke="#000" stroke-width="2.8"/><path d="M8.5 13 L15.5 20 L29 6" stroke="#fff" stroke-width="7" fill="none" stroke-linecap="round" stroke-linejoin="round"/><path d="M8.5 13 L15.5 20 L29 6" stroke="#111" stroke-width="4" fill="none" stroke-linecap="round" stroke-linejoin="round"/></svg>
<div class="t d" style="left:312.5px;top:387.34px;font-size:12px;color:#333333;font-weight:normal;font-style:normal;">Cluster</div>
<div class="t d" style="left:443.1px;top:387.34px;font-size:12px;color:#333333;font-weight:normal;font-style:normal;letter-spacing:-0.55px;">CUSTOMER2_ALLMANU</div>
<div class="t d" style="left:893.1px;top:387.34px;font-size:12px;color:#333333;font-weight:normal;font-style:normal;">$$$$</div>
<div class="t d" style="left:1033.1px;top:387.34px;font-size:12px;color:#333333;font-weight:normal;font-style:normal;">All</div>
<svg style="left:51px;top:430.5px" width="13" height="11"><path d="M1 5.5 L4.8 9.3 L12 1.5" stroke="#a8a8a8" stroke-width="2" fill="none"/></svg>
<svg style="left:198px;top:421.0px" width="30" height="30" viewBox="0 0 30 30"><circle cx="15" cy="15" r="13.5" fill="rgba(0,0,0,0.08)"/><circle cx="15" cy="15" r="11.6" fill="#5cb46e" stroke="#000" stroke-width="2.8"/><path d="M8.5 13 L15.5 20 L29 6" stroke="#fff" stroke-width="7" fill="none" stroke-linecap="round" stroke-linejoin="round"/><path d="M8.5 13 L15.5 20 L29 6" stroke="#111" stroke-width="4" fill="none" stroke-linecap="round" stroke-linejoin="round"/></svg>
<div class="t d" style="left:312.5px;top:432.34px;font-size:12px;color:#333333;font-weight:normal;font-style:normal;">Cluster</div>
<div class="t d" style="left:443.1px;top:432.34px;font-size:12px;color:#333333;font-weight:normal;font-style:normal;letter-spacing:-0.55px;">CUSTOMER2_SERVERS</div>
<svg style="left:895px;top:432.90px" width="32" height="10"><path d="M4.40,0.50 L5.52,3.46 L8.68,3.61 L6.21,5.59 L7.05,8.64 L4.40,6.90 L1.75,8.64 L2.59,5.59 L0.12,3.61 L3.28,3.46 Z M14.65,0.50 L15.77,3.46 L18.93,3.61 L16.46,5.59 L17.30,8.64 L14.65,6.90 L12.00,8.64 L12.84,5.59 L10.37,3.61 L13.53,3.46 Z M24.90,0.50 L26.02,3.46 L29.18,3.61 L26.71,5.59 L27.55,8.64 L24.90,6.90 L22.25,8.64 L23.09,5.59 L20.62,3.61 L23.78,3.46 Z" fill="#3a3a3a"/></svg>
<div class="t d" style="left:1033.1px;top:432.34px;font-size:12px;color:#333333;font-weight:normal;font-style:normal;">All</div>
<svg style="left:51px;top:492.5px" width="13" height="11"><path d="M1 5.5 L4.8 9.3 L12 1.5" stroke="#a8a8a8" stroke-width="2" fill="none"/></svg>
<svg style="left:198px;top:483.0px" width="30" height="30" viewBox="0 0 30 30"><circle cx="15" cy="15" r="13.5" fill="rgba(0,0,0,0.08)"/><circle cx="15" cy="15" r="11.6" fill="#5cb46e" stroke="#000" stroke-width="2.8"/><path d="M8.5 13 L15.5 20 L29 6" stroke="#fff" stroke-width="7" fill="none" stroke-linecap="round" stroke-linejoin="round"/><path d="M8.5 13 L15.5 20 L29 6" stroke="#111" stroke-width="4" fill="none" stroke-linecap="round" stroke-linejoin="round"/></svg>
<div class="t d" style="left:312.5px;top:494.34px;font-size:12px;color:#333333;font-weight:normal;font-style:normal;">Cluster</div>
<div class="t d" style="left:443.1px;top:494.34px;font-size:12px;color:#333333;font-weight:normal;font-style:normal;letter-spacing:-0.55px;">CUSTOMER2_SWITCH</div>
<svg style="left:895px;top:494.90px" width="32" height="10"><path d="M4.40,0.50 L5.52,3.46 L8.68,3.61 L6.21,5.59 L7.05,8.64 L4.40,6.90 L1.75,8.64 L2.59,5.59 L0.12,3.61 L3.28,3.46 Z M14.65,0.50 L15.77,3.46 L18.93,3.61 L16.46,5.59 L17.30,8.64 L14.65,6.90 L12.00,8.64 L12.84,5.59 L10.37,3.61 L13.53,3.46 Z M24.90,0.50 L26.02,3.46 L29.18,3.61 L26.71,5.59 L27.55,8.64 L24.90,6.90 L22.25,8.64 L23.09,5.59 L20.62,3.61 L23.78,3.46 Z" fill="#3a3a3a"/></svg>
<div class="t d" style="left:1033.1px;top:494.34px;font-size:12px;color:#333333;font-weight:normal;font-style:normal;">All</div>
<div class="t d" style="left:1164px;top:464.24px;font-size:12px;color:#333333;font-weight:normal;font-style:normal;">Cluster result: OK</div>
<div class="t d" style="left:1174px;top:481.24px;font-size:12px;color:#333333;font-weight:normal;font-style:normal;">•</div>
<div class="t d" style="left:1189.5px;top:481.24px;font-size:12px;color:#333333;font-weight:normal;font-style:normal;letter-spacing:-0.3px;">DOWN SWITCH1_CUSTOMER2</div>
<div class="t d" style="left:1174px;top:498.24px;font-size:12px;color:#333333;font-weight:normal;font-style:normal;">•</div>
<div class="t d" style="left:1189.5px;top:498.24px;font-size:12px;color:#333333;font-weight:normal;font-style:normal;letter-spacing:-0.3px;">DOWN SWITCH3_CUSTOMER2</div>
<div class="t d" style="left:1164px;top:515.24px;font-size:12px;color:#333333;font-weight:normal;font-style:normal;">And [ 2 ] OK.</div>
<svg style="left:51px;top:554.5px" width="13" height="11"><path d="M1 5.5 L4.8 9.3 L12 1.5" stroke="#a8a8a8" stroke-width="2" fill="none"/></svg>
<svg style="left:198px;top:545.0px" width="30" height="30" viewBox="0 0 30 30"><circle cx="15" cy="15" r="13.5" fill="rgba(0,0,0,0.08)"/><circle cx="15" cy="15" r="11.6" fill="#5cb46e" stroke="#000" stroke-width="2.8"/><path d="M8.5 13 L15.5 20 L29 6" stroke="#fff" stroke-width="7" fill="none" stroke-linecap="round" stroke-linejoin="round"/><path d="M8.5 13 L15.5 20 L29 6" stroke="#111" stroke-width="4" fill="none" stroke-linecap="round" stroke-linejoin="round"/></svg>
<div class="t d" style="left:312.5px;top:556.34px;font-size:12px;color:#333333;font-weight:normal;font-style:normal;">Cluster</div>
<div class="t d" style="left:443.1px;top:556.34px;font-size:12px;color:#333333;font-weight:normal;font-style:normal;letter-spacing:-0.55px;">CUSTOMERS_ALLMANU</div>
<svg style="left:895px;top:556.90px" width="32" height="10"><path d="M4.40,0.50 L5.52,3.46 L8.68,3.61 L6.21,5.59 L7.05,8.64 L4.40,6.90 L1.75,8.64 L2.59,5.59 L0.12,3.61 L3.28,3.46 Z M14.65,0.50 L15.77,3.46 L18.93,3.61 L16.46,5.59 L17.30,8.64 L14.65,6.90 L12.00,8.64 L12.84,5.59 L10.37,3.61 L13.53,3.46 Z M24.90,0.50 L26.02,3.46 L29.18,3.61 L26.71,5.59 L27.55,8.64 L24.90,6.90 L22.25,8.64 L23.09,5.59 L20.62,3.61 L23.78,3.46 Z" fill="#3a3a3a"/></svg>
<div class="t d" style="left:1033.1px;top:556.34px;font-size:12px;color:#333333;font-weight:normal;font-style:normal;">All</div>
<svg style="left:51px;top:599.5px" width="13" height="11"><path d="M1 5.5 L4.8 9.3 L12 1.5" stroke="#a8a8a8" stroke-width="2" fill="none"/></svg>
<svg style="left:198px;top:590.0px" width="30" height="30" viewBox="0 0 30 30"><circle cx="15" cy="15" r="13.5" fill="rgba(0,0,0,0.08)"/><circle cx="15" cy="15" r="11.6" fill="#5cb46e" stroke="#000" stroke-width="2.8"/><path d="M8.5 13 L15.5 20 L29 6" stroke="#fff" stroke-width="7" fill="none" stroke-linecap="round" stroke-linejoin="round"/><path d="M8.5 13 L15.5 20 L29 6" stroke="#111" stroke-width="4" fill="none" stroke-linecap="round" stroke-linejoin="round"/></svg>
<div class="t d" style="left:312.5px;top:601.34px;font-size:12px;color:#333333;font-weight:normal;font-style:normal;">Cluster</div>
<div class="t d" style="left:443.1px;top:601.34px;font-size:12px;color:#333333;font-weight:normal;font-style:normal;letter-spacing:-0.55px;">CUSTOMERS_SHARED</div>
<div class="t d" style="left:893.1px;top:601.34px;font-size:12px;color:#333333;font-weight:normal;font-style:normal;">$$$$$</div>
<div class="t d" style="left:1033.1px;top:601.34px;font-size:12px;color:#333333;font-weight:normal;font-style:normal;">All</div>
<svg style="left:51px;top:644.0px" width="13" height="11"><path d="M1 5.5 L4.8 9.3 L12 1.5" stroke="#a8a8a8" stroke-width="2" fill="none"/></svg>
<svg style="left:198px;top:634.5px" width="30" height="30" viewBox="0 0 30 30"><circle cx="15" cy="15" r="13.5" fill="rgba(0,0,0,0.08)"/><circle cx="15" cy="15" r="11.6" fill="#e0363c" stroke="#000" stroke-width="2.8"/><path d="M10 10 L20 20 M20 10 L10 20" stroke="#000" stroke-width="2.6" stroke-linecap="round"/></svg>
<div class="t d" style="left:312.5px;top:644.84px;font-size:12px;color:#333333;font-weight:normal;font-style:normal;">Hôte</div>
<div class="t d" style="left:443.1px;top:644.84px;font-size:12px;color:#333333;font-weight:normal;font-style:normal;letter-spacing:0px;">dag1</div>
<div class="t d" style="left:743.1px;top:644.84px;font-size:12px;color:#333333;font-weight:normal;font-style:normal;">127.0.0.1</div>
<div class="t d" style="left:893.1px;top:644.84px;font-size:12px;color:#333333;font-weight:normal;font-style:normal;">$$$$$$</div>
<div class="t d" style="left:1033.1px;top:644.84px;font-size:12px;color:#333333;font-weight:normal;font-style:normal;">All</div>
<div class="t d" style="left:1163.1px;top:644.84px;font-size:12px;color:#333333;font-weight:normal;font-style:normal;">Error : connexion failed &#x27;Error reading SSH protocol banner&#x27;</div>
<div class="t d" style="left:1493.1px;top:644.84px;font-size:12px;color:#333333;font-weight:normal;font-style:normal;">No handlers could be found for logger &quot;paramiko.transport&quot;</div>
<svg style="left:51px;top:688.5px" width="13" height="11"><path d="M1 5.5 L4.8 9.3 L12 1.5" stroke="#a8a8a8" stroke-width="2" fill="none"/></svg>
<svg style="left:224px;top:679.0px" width="30" height="30" viewBox="0 0 30 30"><circle cx="15" cy="15" r="13.5" fill="rgba(0,0,0,0.08)"/><defs><radialGradient id="gq" cx="50%" cy="35%" r="65%"><stop offset="0" stop-color="#9a9a9a"/><stop offset="1" stop-color="#5e5e5e"/></radialGradient></defs><circle cx="15" cy="15" r="11.7" fill="url(#gq)" stroke="#000" stroke-width="2.9"/><path d="M11 10.6 Q11.6 7.3 15.4 7.3 Q19.4 7.5 19.4 10.6 Q19.4 12.8 16.9 14.3 Q15.2 15.4 15.1 17.2" stroke="#fff" stroke-width="4.6" fill="none" stroke-linecap="round"/><circle cx="14.7" cy="20.8" r="2.9" fill="#fff"/><path d="M11 10.6 Q11.6 7.3 15.4 7.3 Q19.4 7.5 19.4 10.6 Q19.4 12.8 16.9 14.3 Q15.2 15.4 15.1 17.2" stroke="#000" stroke-width="2.5" fill="none" stroke-linecap="round"/><circle cx="14.7" cy="20.8" r="1.8" fill="#000"/></svg>
<div class="t d" style="left:338.5px;top:690.34px;font-size:12px;color:#333333;font-weight:normal;font-style:normal;">Check</div>
<div class="t d" style="left:469.1px;top:690.34px;font-size:12px;color:#999;font-weight:normal;font-style:normal;letter-spacing:0px;">dag1</div>
<div class="t d" style="left:619.1px;top:690.34px;font-size:12px;color:#333333;font-weight:normal;font-style:normal;">CPU Stats</div>
<svg style="left:921px;top:690.90px" width="32" height="10"><path d="M4.40,0.50 L5.52,3.46 L8.68,3.61 L6.21,5.59 L7.05,8.64 L4.40,6.90 L1.75,8.64 L2.59,5.59 L0.12,3.61 L3.28,3.46 Z M14.65,0.50 L15.77,3.46 L18.93,3.61 L16.46,5.59 L17.30,8.64 L14.65,6.90 L12.00,8.64 L12.84,5.59 L10.37,3.61 L13.53,3.46 Z M24.90,0.50 L26.02,3.46 L29.18,3.61 L26.71,5.59 L27.55,8.64 L24.90,6.90 L22.25,8.64 L23.09,5.59 L20.62,3.61 L23.78,3.46 Z" fill="#3a3a3a"/></svg>
<div class="t d" style="left:1059.1px;top:690.34px;font-size:12px;color:#333333;font-weight:normal;font-style:normal;">All</div>
<div class="t d" style="left:1189.1px;top:690.34px;font-size:12px;color:#333333;font-weight:normal;font-style:normal;">(unreachable host)</div>
<svg style="left:51px;top:733.5px" width="13" height="11"><path d="M1 5.5 L4.8 9.3 L12 1.5" stroke="#a8a8a8" stroke-width="2" fill="none"/></svg>
<svg style="left:224px;top:724.0px" width="30" height="30" viewBox="0 0 30 30"><circle cx="15" cy="15" r="13.5" fill="rgba(0,0,0,0.08)"/><defs><radialGradient id="gq" cx="50%" cy="35%" r="65%"><stop offset="0" stop-color="#9a9a9a"/><stop offset="1" stop-color="#5e5e5e"/></radialGradient></defs><circle cx="15" cy="15" r="11.7" fill="url(#gq)" stroke="#000" stroke-width="2.9"/><path d="M11 10.6 Q11.6 7.3 15.4 7.3 Q19.4 7.5 19.4 10.6 Q19.4 12.8 16.9 14.3 Q15.2 15.4 15.1 17.2" stroke="#fff" stroke-width="4.6" fill="none" stroke-linecap="round"/><circle cx="14.7" cy="20.8" r="2.9" fill="#fff"/><path d="M11 10.6 Q11.6 7.3 15.4 7.3 Q19.4 7.5 19.4 10.6 Q19.4 12.8 16.9 14.3 Q15.2 15.4 15.1 17.2" stroke="#000" stroke-width="2.5" fill="none" stroke-linecap="round"/><circle cx="14.7" cy="20.8" r="1.8" fill="#000"/></svg>
<div class="t d" style="left:338.5px;top:735.34px;font-size:12px;color:#333333;font-weight:normal;font-style:normal;">Check</div>
<div class="t d" style="left:469.1px;top:735.34px;font-size:12px;color:#999;font-weight:normal;font-style:normal;letter-spacing:0px;">dag1</div>
<div class="t d" style="left:619.1px;top:735.34px;font-size:12px;color:#333333;font-weight:normal;font-style:normal;">CpuStats</div>
<svg style="left:921px;top:735.90px" width="32" height="10"><path d="M4.40,0.50 L5.52,3.46 L8.68,3.61 L6.21,5.59 L7.05,8.64 L4.40,6.90 L1.75,8.64 L2.59,5.59 L0.12,3.61 L3.28,3.46 Z M14.65,0.50 L15.77,3.46 L18.93,3.61 L16.46,5.59 L17.30,8.64 L14.65,6.90 L12.00,8.64 L12.84,5.59 L10.37,3.61 L13.53,3.46 Z M24.90,0.50 L26.02,3.46 L29.18,3.61 L26.71,5.59 L27.55,8.64 L24.90,6.90 L22.25,8.64 L23.09,5.59 L20.62,3.61 L23.78,3.46 Z" fill="#3a3a3a"/></svg>
<div class="t d" style="left:1059.1px;top:735.34px;font-size:12px;color:#333333;font-weight:normal;font-style:normal;">All</div>
<div class="t d" style="left:1189.1px;top:735.34px;font-size:12px;color:#333333;font-weight:normal;font-style:normal;">(unreachable host)</div>
<svg style="left:51px;top:778.5px" width="13" height="11"><path d="M1 5.5 L4.8 9.3 L12 1.5" stroke="#a8a8a8" stroke-width="2" fill="none"/></svg>
<svg style="left:224px;top:769.0px" width="30" height="30" viewBox="0 0 30 30"><circle cx="15" cy="15" r="13.5" fill="rgba(0,0,0,0.08)"/><defs><radialGradient id="gq" cx="50%" cy="35%" r="65%"><stop offset="0" stop-color="#9a9a9a"/><stop offset="1" stop-color="#5e5e5e"/></radialGradient></defs><circle cx="15" cy="15" r="11.7" fill="url(#gq)" stroke="#000" stroke-width="2.9"/><path d="M11 10.6 Q11.6 7.3 15.4 7.3 Q19.4 7.5 19.4 10.6 Q19.4 12.8 16.9 14.3 Q15.2 15.4 15.1 17.2" stroke="#fff" stroke-width="4.6" fill="none" stroke-linecap="round"/><circle cx="14.7" cy="20.8" r="2.9" fill="#fff"/><path d="M11 10.6 Q11.6 7.3 15.4 7.3 Q19.4 7.5 19.4 10.6 Q19.4 12.8 16.9 14.3 Q15.2 15.4 15.1 17.2" stroke="#000" stroke-width="2.5" fill="none" stroke-linecap="round"/><circle cx="14.7" cy="20.8" r="1.8" fill="#000"/></svg>
<div class="t d" style="left:338.5px;top:780.34px;font-size:12px;color:#333333;font-weight:normal;font-style:normal;">Check</div>
<div class="t d" style="left:469.1px;top:780.34px;font-size:12px;color:#999;font-weight:normal;font-style:normal;letter-spacing:0px;">dag1</div>
<div class="t d" style="left:619.1px;top:780.34px;font-size:12px;color:#333333;font-weight:normal;font-style:normal;">Disks</div>
<svg style="left:921px;top:780.90px" width="32" height="10"><path d="M4.40,0.50 L5.52,3.46 L8.68,3.61 L6.21,5.59 L7.05,8.64 L4.40,6.90 L1.75,8.64 L2.59,5.59 L0.12,3.61 L3.28,3.46 Z M14.65,0.50 L15.77,3.46 L18.93,3.61 L16.46,5.59 L17.30,8.64 L14.65,6.90 L12.00,8.64 L12.84,5.59 L10.37,3.61 L13.53,3.46 Z M24.90,0.50 L26.02,3.46 L29.18,3.61 L26.71,5.59 L27.55,8.64 L24.90,6.90 L22.25,8.64 L23.09,5.59 L20.62,3.61 L23.78,3.46 Z" fill="#3a3a3a"/></svg>
<div class="t d" style="left:1059.1px;top:780.34px;font-size:12px;color:#333333;font-weight:normal;font-style:normal;">All</div>
<div class="t d" style="left:1189.1px;top:780.34px;font-size:12px;color:#333333;font-weight:normal;font-style:normal;">(unreachable host)</div>
<svg style="left:51px;top:823.5px" width="13" height="11"><path d="M1 5.5 L4.8 9.3 L12 1.5" stroke="#a8a8a8" stroke-width="2" fill="none"/></svg>
<svg style="left:224px;top:814.0px" width="30" height="30" viewBox="0 0 30 30"><circle cx="15" cy="15" r="13.5" fill="rgba(0,0,0,0.08)"/><defs><radialGradient id="gq" cx="50%" cy="35%" r="65%"><stop offset="0" stop-color="#9a9a9a"/><stop offset="1" stop-color="#5e5e5e"/></radialGradient></defs><circle cx="15" cy="15" r="11.7" fill="url(#gq)" stroke="#000" stroke-width="2.9"/><path d="M11 10.6 Q11.6 7.3 15.4 7.3 Q19.4 7.5 19.4 10.6 Q19.4 12.8 16.9 14.3 Q15.2 15.4 15.1 17.2" stroke="#fff" stroke-width="4.6" fill="none" stroke-linecap="round"/><circle cx="14.7" cy="20.8" r="2.9" fill="#fff"/><path d="M11 10.6 Q11.6 7.3 15.4 7.3 Q19.4 7.5 19.4 10.6 Q19.4 12.8 16.9 14.3 Q15.2 15.4 15.1 17.2" stroke="#000" stroke-width="2.5" fill="none" stroke-linecap="round"/><circle cx="14.7" cy="20.8" r="1.8" fill="#000"/></svg>
<div class="t d" style="left:338.5px;top:825.34px;font-size:12px;color:#333333;font-weight:normal;font-style:normal;">Check</div>
<div class="t d" style="left:469.1px;top:825.34px;font-size:12px;color:#999;font-weight:normal;font-style:normal;letter-spacing:0px;">dag1</div>
<div class="t d" style="left:619.1px;top:825.34px;font-size:12px;color:#333333;font-weight:normal;font-style:normal;">Disks Stats</div>
<svg style="left:921px;top:825.90px" width="32" height="10"><path d="M4.40,0.50 L5.52,3.46 L8.68,3.61 L6.21,5.59 L7.05,8.64 L4.40,6.90 L1.75,8.64 L2.59,5.59 L0.12,3.61 L3.28,3.46 Z M14.65,0.50 L15.77,3.46 L18.93,3.61 L16.46,5.59 L17.30,8.64 L14.65,6.90 L12.00,8.64 L12.84,5.59 L10.37,3.61 L13.53,3.46 Z M24.90,0.50 L26.02,3.46 L29.18,3.61 L26.71,5.59 L27.55,8.64 L24.90,6.90 L22.25,8.64 L23.09,5.59 L20.62,3.61 L23.78,3.46 Z" fill="#3a3a3a"/></svg>
<div class="t d" style="left:1059.1px;top:825.34px;font-size:12px;color:#333333;font-weight:normal;font-style:normal;">All</div>
<div class="t d" style="left:1189.1px;top:825.34px;font-size:12px;color:#333333;font-weight:normal;font-style:normal;">(unreachable host)</div>
<svg style="left:16px;top:12px" width="11" height="11"><rect x="0.5" y="0.5" width="10" height="10" rx="2" fill="#333" stroke="#c88a3c" stroke-width="0.6"/><path d="M2.5 5.5 H8.5" stroke="#fff" stroke-width="2"/></svg>
<svg style="left:16px;top:56px" width="11" height="11"><rect x="0.5" y="0.5" width="10" height="10" rx="2" fill="#333" stroke="#c88a3c" stroke-width="0.6"/><path d="M2.5 5.5 H8.5 M5.5 2.5 V8.5" stroke="#fff" stroke-width="1.8"/></svg>
<svg style="left:23px;top:46px" width="15" height="15"><circle cx="7.2" cy="6.8" r="6.8" fill="#7ec8e3"/><text x="7.2" y="9.6" font-size="8.5" font-weight="bold" fill="#fff" text-anchor="middle" font-family="Liberation Sans" letter-spacing="-0.5">15</text></svg>
<svg style="left:16px;top:646px" width="11" height="11"><rect x="0.5" y="0.5" width="10" height="10" rx="2" fill="#333" stroke="#c88a3c" stroke-width="0.6"/><path d="M2.5 5.5 H8.5" stroke="#fff" stroke-width="2"/></svg>
</div>
<div class="b" style="left:1893px;top:204px;width:17px;height:829px;background:#f0f0f0;"></div>
<svg style="left:1896px;top:204px" width="11" height="8"><path d="M0 6 H11 L5.5 0.5 Z" fill="#a3a3a3"/></svg>
<div class="b" style="left:1895px;top:215px;width:13px;height:449px;background:#c1c1c1;"></div>
<svg style="left:1896px;top:1020px" width="11" height="8"><path d="M0 0.5 H11 L5.5 6 Z" fill="#505050"/></svg>
<div class="b" style="left:50px;top:1033px;width:1843px;height:14px;background:#f0f0f0;"></div>
<div class="b" style="left:50px;top:1035px;width:887px;height:12px;background:#c1c1c1;"></div>
<svg style="left:1881px;top:1036px" width="8" height="11"><path d="M1 0.5 V10 L6.5 5.25 Z" fill="#505050"/></svg>
<div class="b" style="left:1893px;top:1033px;width:17px;height:14px;background:#ffffff;"></div>
<div class="b" style="left:1777px;top:955px;width:116px;height:55px;background:#35a4dc;border-radius:6px 0 0 6px;"></div>
<div class="b" style="left:1782px;top:969px;width:35px;height:26px;border-radius:4px;background:linear-gradient(#ffffff,#d9d9d9);border:1.5px solid #1a1a1a;box-shadow:1px 2px 3px rgba(0,0,0,0.6);"></div>
<div class="t " style="left:1782.0px;width:35px;text-align:center;top:975.11px;font-size:17px;color:#222;font-weight:normal;font-style:normal;">F1</div>
<div class="t " style="left:1830.5px;top:974.06px;font-size:18px;color:#ffffff;font-weight:bold;font-style:normal;letter-spacing:-0.4px;">Help</div>
<svg style="left:1880px;top:959px" width="11" height="11"><path d="M1 1 L10 10 M10 1 L1 10" stroke="#fff" stroke-width="1.8"/></svg>
<div class="b" style="left:54px;top:1054px;width:33px;height:20px;border-radius:3px;border:1px solid #dedbd5;"></div>
<div class="b" style="left:92.7px;top:1054px;width:32.3px;height:20px;border-radius:3px;border:1px solid #dedbd5;"></div>
<svg style="left:60px;top:1059px" width="20" height="11"><path d="M11 0.5 V10.5 L5 5.5 Z" fill="#bdbdbd"/></svg>
<svg style="left:104px;top:1059px" width="10" height="11"><path d="M8 0.5 V10.5 L2 5.5 Z" fill="#bdbdbd"/></svg>
<div class="b" style="left:140.6px;top:1054px;width:38px;height:20px;background:#fff;border:1px solid #dcdcdc;border-radius:3px;"></div>
<div class="t " style="left:147px;top:1056.65px;font-size:14px;color:#222;font-weight:normal;font-style:normal;">1</div>
<svg style="left:161px;top:1059px" width="8" height="6"><path d="M0 0 H7 L3.5 6 Z" fill="#111"/></svg>
<div class="t " style="left:181px;top:1057.92px;font-size:12.5px;color:#777;font-weight:normal;font-style:normal;">/9</div>
<div class="b" style="left:206px;top:1054px;width:33px;height:20px;border-radius:3px;border:1px solid #dedbd5;"></div>
<svg style="left:218px;top:1058px" width="10" height="12"><path d="M1 0.5 V11 L8.5 5.75 Z" fill="#222"/></svg>
<div class="b" style="left:244px;top:1054px;width:31px;height:20px;border-radius:3px;border:1px solid #dedbd5;"></div>
<svg style="left:253px;top:1058px" width="16" height="12"><path d="M1 0.5 V11 L8.5 5.75 Z" fill="#222"/><rect x="10" y="0.5" width="2" height="11" fill="#222"/></svg>
<div class="b" style="left:294px;top:1054px;width:55px;height:20px;background:#fff;border:1px solid #dcdcdc;border-radius:3px;"></div>
<div class="t " style="left:302px;top:1056.65px;font-size:14px;color:#222;font-weight:normal;font-style:normal;">100</div>
<svg style="left:331px;top:1059px" width="8" height="6"><path d="M0 0 H7 L3.5 6 Z" fill="#111"/></svg>
<div class="t " style="left:352px;top:1058.34px;font-size:12px;color:#666;font-weight:normal;font-style:normal;">lignes/page</div>
<div class="t " style="left:1509.5px;width:400px;text-align:right;top:1059.04px;font-size:12px;color:#666;font-weight:normal;font-style:normal;letter-spacing:-0.1px;">1 - 107 sur 917 Clusters/Hôtes/Checks</div>
<div class="b" style="left:46px;top:64px;width:1871px;height:65px;border:2px solid #ff0000;box-shadow:2px 2px 3px rgba(0,0,0,0.35), inset 2px 2px 3px rgba(0,0,0,0.28);"></div>
<div class="b" style="left:46px;top:130px;width:1871px;height:31px;border:2px solid #ff9933;box-shadow:2px 2px 3px rgba(0,0,0,0.35), inset 2px 2px 3px rgba(0,0,0,0.28);"></div>
<div class="b" style="left:46px;top:162px;width:1871px;height:39px;border:2px solid #63b166;box-shadow:2px 2px 3px rgba(0,0,0,0.35), inset 2px 2px 3px rgba(0,0,0,0.28);"></div>
<div class="b" style="left:47px;top:202px;width:1870px;height:847px;border:2px solid #0b95dc;box-shadow:2px 2px 3px rgba(0,0,0,0.35), inset 2px 2px 3px rgba(0,0,0,0.28);"></div>
<div class="b" style="left:46px;top:1050px;width:1871px;height:28px;border:2px solid #7f00ff;box-shadow:2px 2px 3px rgba(0,0,0,0.35), inset 2px 2px 3px rgba(0,0,0,0.28);"></div>
<div class="b" style="left:70px;top:64px;width:226px;height:31px;background:#fff;border:2px solid #c80000;box-shadow:3px 3px 3px rgba(0,0,0,0.35);"></div>
<div class="t " style="left:109.5px;top:66.98px;font-size:24px;color:#cc0000;font-weight:normal;font-style:normal;">Zone d&#x27;entête</div>
<div class="b" style="left:73.4px;top:130px;width:204.6px;height:31px;background:#fff;border:2px solid #ff9933;box-shadow:3px 3px 3px rgba(0,0,0,0.35);"></div>
<div class="t " style="left:112.9px;top:131.88px;font-size:24px;color:#ff9933;font-weight:normal;font-style:normal;">Zone de tri</div>
<div class="b" style="left:70px;top:196.7px;width:345px;height:31.80000000000001px;background:#fff;border:2px solid #5cb160;box-shadow:3px 3px 3px rgba(0,0,0,0.35);"></div>
<div class="t " style="left:109.5px;top:200.08px;font-size:24px;color:#5cb160;font-weight:normal;font-style:normal;">Zone de filtres avancés</div>
<div class="b" style="left:74.4px;top:581px;width:290.6px;height:34px;background:#fff;border:2px solid #0e93dc;box-shadow:3px 3px 3px rgba(0,0,0,0.35);"></div>
<div class="t " style="left:113.9px;top:585.18px;font-size:24px;color:#0e93dc;font-weight:normal;font-style:normal;">Zone des éléments</div>
<div class="b" style="left:74px;top:1018px;width:286.5px;height:33px;background:#fff;border:2px solid #8000ff;box-shadow:3px 3px 3px rgba(0,0,0,0.35);"></div>
<div class="t " style="left:113.5px;top:1021.38px;font-size:24px;color:#8000ff;font-weight:normal;font-style:normal;">Zone de pagination</div>
<div class="b" style="left:24px;top:42px;width:50px;height:50px;border-radius:50%;background:#ff0000;"></div>
<svg style="left:24px;top:42px" width="50" height="50"><path d="M23.6 18.2 H25.6 V29.6 H23.7 V20.9 Q22.4 22.2 20.7 22.9 V21.1 Q22.6 20.1 23.6 18.2 Z" fill="#fff"/></svg>
<div class="b" style="left:23px;top:105.5px;width:50px;height:50px;border-radius:50%;background:#ff9933;"></div>
<div class="t " style="left:23.0px;width:50px;text-align:center;top:121.83px;font-size:16.5px;color:#ffffff;font-weight:normal;font-style:normal;">2</div>
<div class="b" style="left:24px;top:164px;width:50px;height:50px;border-radius:50%;background:#66b36a;"></div>
<div class="t " style="left:24.0px;width:50px;text-align:center;top:180.33px;font-size:16.5px;color:#ffffff;font-weight:normal;font-style:normal;">3</div>
<div class="b" style="left:24px;top:556px;width:50px;height:50px;border-radius:50%;background:#0b95dc;"></div>
<div class="t " style="left:24.0px;width:50px;text-align:center;top:572.33px;font-size:16.5px;color:#ffffff;font-weight:normal;font-style:normal;">4</div>
<div class="b" style="left:23px;top:1028px;width:50px;height:50px;border-radius:50%;background:#7f00ff;"></div>
<div class="t " style="left:23.0px;width:50px;text-align:center;top:1044.33px;font-size:16.5px;color:#ffffff;font-weight:normal;font-style:normal;">5</div>
</body></html>
